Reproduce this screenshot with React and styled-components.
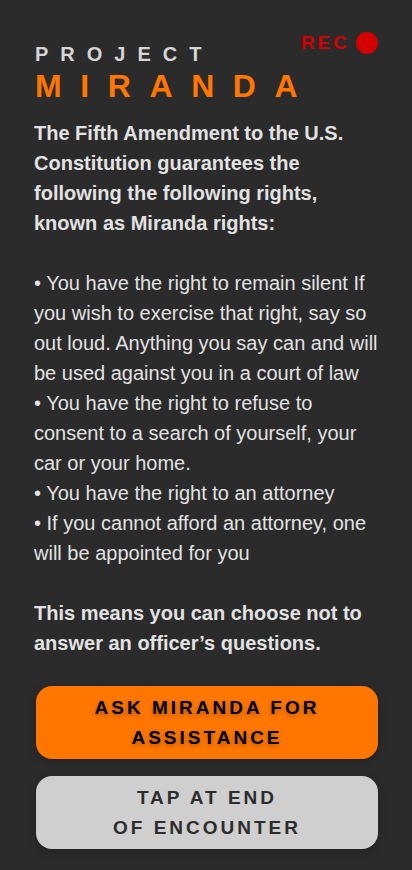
import styled, { createGlobalStyle } from 'styled-components';

const GlobalStyle = createGlobalStyle`
	html, body {
		margin: 0;
		padding: 0;
		background: #2b2b2b;
	}
	body {
		font-family: 'Liberation Sans', Arial, sans-serif;
	}
`;

function App() {
	return (
		<>
			<GlobalStyle />
			<Page>
				<Header>
					<Title>
						<Project>PROJECT</Project>
						<Miranda>MIRANDA</Miranda>
					</Title>
					<Rec>
						REC
						<RecDot />
					</Rec>
				</Header>
				<Body>
					<Strong>
						The Fifth Amendment to the U.S. Constitution guarantees the following the following rights, known as Miranda rights:
					</Strong>
					<Blank />
					<p>
						• You have the right to remain silent If you wish to exercise that right, say so out loud. Anything you say can and will be used against you in a court of law
						<br />• You have the right to refuse to consent to a search of yourself, your car or your home.
						<br />• You have the right to an attorney
						<br />• If you cannot afford an attorney, one will be appointed for you
					</p>
					<Blank />
					<Strong>This means you can choose not to answer an officer’s questions.</Strong>
				</Body>
				<Buttons>
					<Button $variant="primary">
						ASK MIRANDA FOR
						<br />
						ASSISTANCE
					</Button>
					<Button $variant="secondary">
						TAP AT END
						<br />
						OF ENCOUNTER
					</Button>
				</Buttons>
			</Page>
		</>
	);
}

export default App;

const Page = styled.div`
	width: 412px;
	min-height: 870px;
	box-sizing: border-box;
	padding: 42px 34px 20px 34px;
	background: #2b2b2b;
	display: flex;
	flex-direction: column;
`;

const Header = styled.div`
	display: flex;
	justify-content: space-between;
	align-items: flex-start;
`;

const Title = styled.div`
	flex: 1;
	min-width: 0;
	display: flex;
	flex-direction: column;
	gap: 2px;
	white-space: nowrap;
`;

const Project = styled.div`
	font-size: 20px;
	line-height: 24px;
	font-weight: 700;
	letter-spacing: 12px;
	color: #d6d6d6;
	padding-left: 1px;
`;

const Miranda = styled.div`
	font-size: 32px;
	line-height: 36px;
	font-weight: 700;
	letter-spacing: 18.6px;
	color: #ff7700;
	padding-left: 1px;
`;

const Rec = styled.div`
	flex: none;
	display: flex;
	align-items: center;
	gap: 6px;
	margin-top: -10px;
	font-size: 19px;
	font-weight: 700;
	letter-spacing: 3px;
	color: #d40000;
`;

const RecDot = styled.span`
	width: 22px;
	height: 22px;
	border-radius: 50%;
	background: #d40000;
`;

const Body = styled.div`
	margin-top: 14px;
	font-size: 20px;
	line-height: 30px;
	color: #e2e2e2;

	p {
		margin: 0;
	}
`;

const Strong = styled.p`
	margin: 0;
	font-weight: 700;
`;

const Blank = styled.div`
	height: 30px;
`;

const Buttons = styled.div`
	margin-top: 28px;
	display: flex;
	flex-direction: column;
	gap: 17px;
	padding: 0 0 0 2px;
`;

const Button = styled.button`
	height: 73px;
	border: none;
	border-radius: 16px;
	font-family: 'Liberation Sans', Arial, sans-serif;
	font-size: 19px;
	line-height: 30px;
	font-weight: 700;
	letter-spacing: 3px;
	text-align: center;
	background: ${(p) => (p.$variant === 'primary' ? '#ff7700' : '#cfcfcf')};
	color: ${(p) => (p.$variant === 'primary' ? '#000000' : '#2d2d2d')};
	text-shadow: ${(p) => (p.$variant === 'primary' ? '0 2px 5px rgba(0, 0, 0, 0.3)' : 'none')};
	box-shadow: 0 2px 8px rgba(0, 0, 0, 0.25);
`;
